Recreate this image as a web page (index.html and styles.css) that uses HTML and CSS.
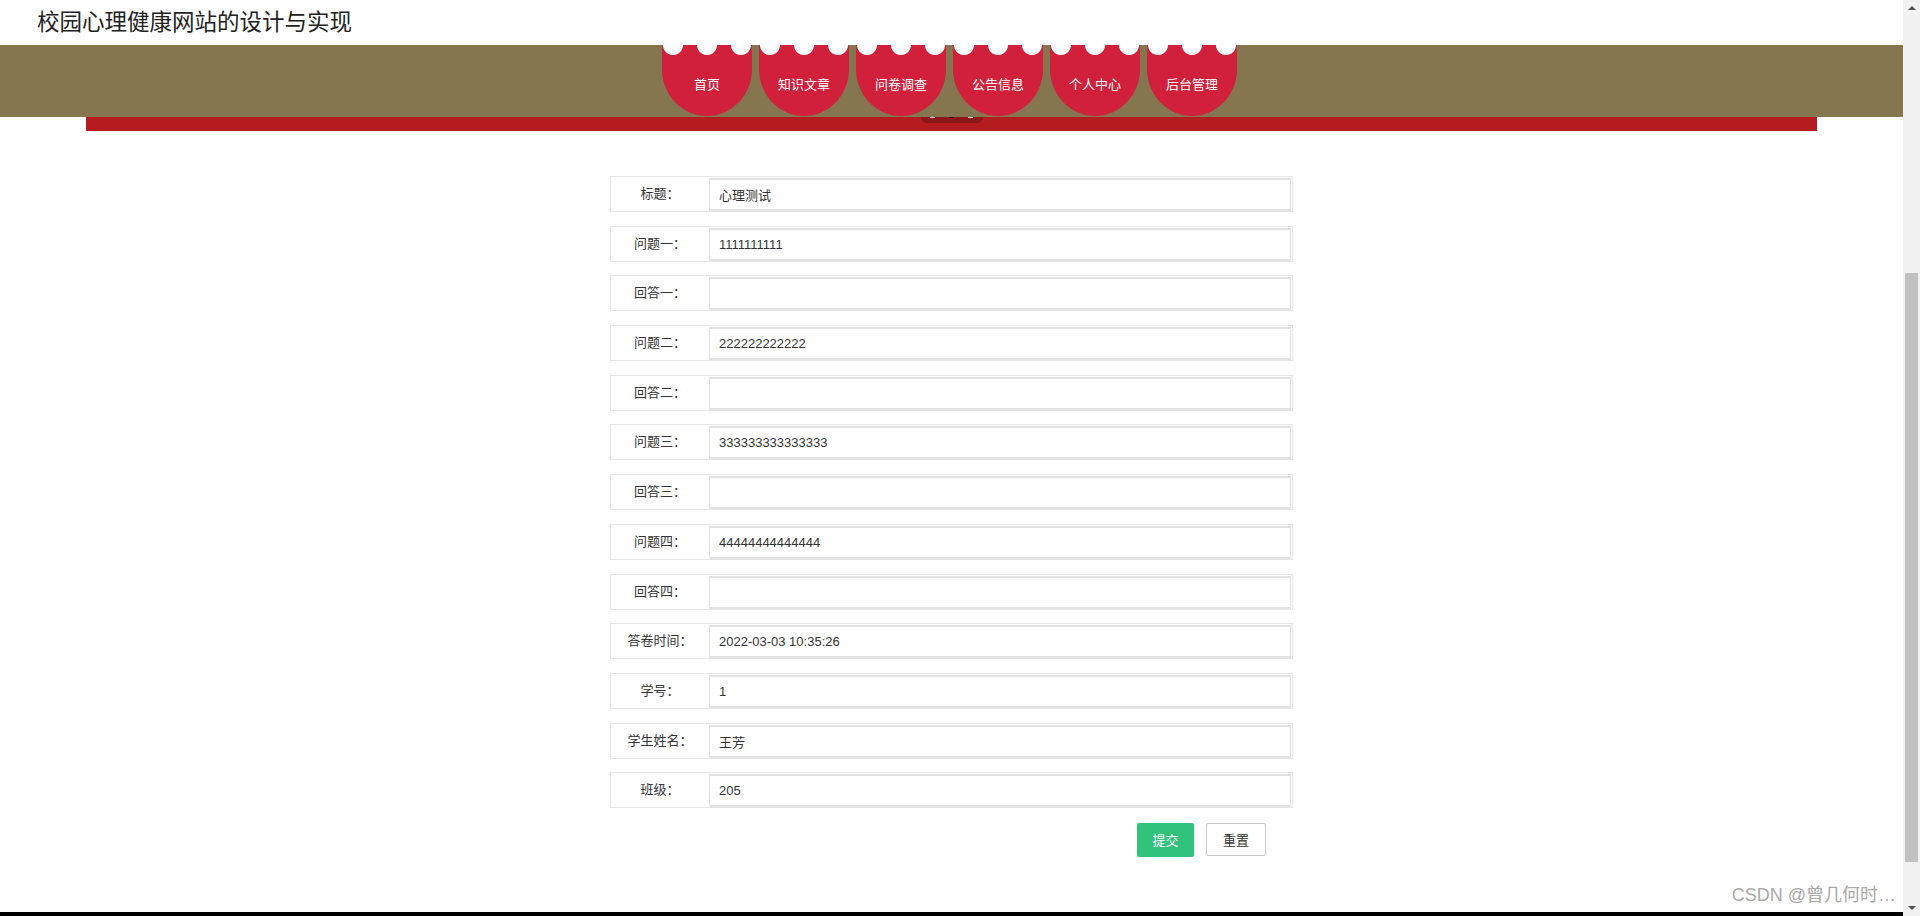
FILE: index.html
```html
<!DOCTYPE html>
<html>

<head>
    <meta charset="utf-8">
    <meta name="viewport" content="width=device-width, initial-scale=1">
    <title>校园心理健康网站的设计与实现</title>
    <link rel="stylesheet" href="styles.css">
</head>

<body>
    <div class="page">
        <div class="topbar">校园心理健康网站的设计与实现</div>

        <div class="navband">
            <a class="nav-tab" href="#">首页</a>
            <a class="nav-tab" href="#">知识文章</a>
            <a class="nav-tab" href="#">问卷调查</a>
            <a class="nav-tab" href="#">公告信息</a>
            <a class="nav-tab" href="#">个人中心</a>
            <a class="nav-tab" href="#">后台管理</a>
        </div>

        <div class="banner">
            <div class="banner-dots">
                <span class="dot light"></span>
                <span class="dot dark"></span>
                <span class="dot light"></span>
            </div>
        </div>

        <form class="detail-form">
            <div class="form-row">
                <label class="row-label">标题：</label>
                <div class="row-field"><input class="row-input" type="text" value="心理测试"></div>
            </div>
            <div class="form-row">
                <label class="row-label">问题一：</label>
                <div class="row-field"><input class="row-input" type="text" value="1111111111"></div>
            </div>
            <div class="form-row">
                <label class="row-label">回答一：</label>
                <div class="row-field"><input class="row-input" type="text" value=""></div>
            </div>
            <div class="form-row">
                <label class="row-label">问题二：</label>
                <div class="row-field"><input class="row-input" type="text" value="222222222222"></div>
            </div>
            <div class="form-row">
                <label class="row-label">回答二：</label>
                <div class="row-field"><input class="row-input" type="text" value=""></div>
            </div>
            <div class="form-row">
                <label class="row-label">问题三：</label>
                <div class="row-field"><input class="row-input" type="text" value="333333333333333"></div>
            </div>
            <div class="form-row">
                <label class="row-label">回答三：</label>
                <div class="row-field"><input class="row-input" type="text" value=""></div>
            </div>
            <div class="form-row">
                <label class="row-label">问题四：</label>
                <div class="row-field"><input class="row-input" type="text" value="44444444444444"></div>
            </div>
            <div class="form-row">
                <label class="row-label">回答四：</label>
                <div class="row-field"><input class="row-input" type="text" value=""></div>
            </div>
            <div class="form-row">
                <label class="row-label">答卷时间：</label>
                <div class="row-field"><input class="row-input" type="text" value="2022-03-03 10:35:26"></div>
            </div>
            <div class="form-row">
                <label class="row-label">学号：</label>
                <div class="row-field"><input class="row-input" type="text" value="1"></div>
            </div>
            <div class="form-row">
                <label class="row-label">学生姓名：</label>
                <div class="row-field"><input class="row-input" type="text" value="王芳"></div>
            </div>
            <div class="form-row">
                <label class="row-label">班级：</label>
                <div class="row-field"><input class="row-input" type="text" value="205"></div>
            </div>

            <div class="form-buttons">
                <button class="btn btn-submit" type="button">提交</button>
                <button class="btn btn-reset" type="reset">重置</button>
            </div>
        </form>

        <div class="bottom-bar"></div>
        <div class="watermark">CSDN @曾几何时…</div>
    </div>

    <div class="scrollbar">
        <span class="arrow-up"></span>
        <span class="scroll-thumb"></span>
        <span class="arrow-down"></span>
    </div>
</body>

</html>
```

FILE: styles.css
```css
html,
body {
    margin: 0;
    height: 100%;
}

body {
    overflow: hidden;
    display: flex;
    font-family: "Liberation Sans", "Noto Sans CJK SC", sans-serif;
    color: #333;
    background: #fff;
}

.page {
    position: relative;
    flex: 1;
    display: flex;
    flex-direction: column;
    height: 100vh;
}

.topbar {
    height: 45px;
    line-height: 45px;
    padding-left: 37px;
    font-size: 22.5px;
    color: #222;
}

.navband {
    height: 72px;
    background-color: #86764f;
    display: flex;
    justify-content: center;
    gap: 7px;
    padding-right: 4px;
}

.nav-tab {
    width: 90px;
    height: 71px;
    box-sizing: border-box;
    padding-top: 32px;
    line-height: 16px;
    text-align: center;
    font-size: 13px;
    color: #fff;
    text-decoration: none;
    background-color: #d0203b;
    background-image: radial-gradient(circle at 50% 0, #fff 9.5px, transparent 10.5px);
    background-size: 34px 20px;
    background-position: -6px 0;
    background-repeat: repeat-x;
    border-radius: 0 0 45px 45px / 0 0 47px 47px;
}

.banner {
    width: 1731px;
    height: 14px;
    margin: 0 auto;
    background-color: #b51c1f;
}

.banner-dots {
    width: 62px;
    height: 6px;
    margin: 0 auto;
    display: flex;
    justify-content: center;
    gap: 14px;
    background-color: #8c1718;
    border-radius: 0 0 8px 8px;
}

.dot {
    width: 5px;
    height: 1px;
}

.dot.light {
    background: #f1d9d9;
}

.dot.dark {
    background: #2a0a0a;
}

.detail-form {
    width: 683px;
    margin: 45px auto 0;
    display: flex;
    flex-direction: column;
    gap: 13.7px;
}

.form-row {
    display: flex;
    height: 36px;
    box-sizing: border-box;
    border: 1px solid #e6e6e6;
}

.row-label {
    width: 98px;
    flex-shrink: 0;
    line-height: 34px;
    text-align: center;
    font-size: 13px;
    color: #333;
}

.row-field {
    flex: 1;
    padding: 1px 1px 0 0;
}

.row-input {
    width: 100%;
    height: 100%;
    box-sizing: border-box;
    margin: 0;
    border: 1px solid #e2e2e2;
    border-width: 2px 1px 2px 1px;
    padding: 0 9px;
    font-family: "Liberation Sans", "Noto Sans CJK SC", sans-serif;
    font-size: 13px;
    color: #333;
    outline: none;
}

.form-buttons {
    display: flex;
    justify-content: flex-end;
    gap: 12px;
    padding-right: 27px;
    margin-top: 1px;
}

.btn {
    height: 34px;
    margin: 0;
    font-family: "Liberation Sans", "Noto Sans CJK SC", sans-serif;
    font-size: 13px;
    border-radius: 2px;
    cursor: pointer;
}

.btn-submit {
    width: 57px;
    color: #fff;
    background-color: #31c27c;
    border: none;
}

.btn-reset {
    width: 60px;
    height: 33px;
    color: #333;
    background-color: #fff;
    border: 1px solid #c9c9c9;
}

.bottom-bar {
    margin-top: auto;
    height: 4px;
    background: #000;
}

.watermark {
    position: absolute;
    right: 7px;
    bottom: 10px;
    font-size: 18px;
    color: #a9a9a9;
    white-space: nowrap;
}

.scrollbar {
    width: 17px;
    flex-shrink: 0;
    height: 100vh;
    background: #f1f1f1;
    display: flex;
    flex-direction: column;
    align-items: center;
}

.arrow-up {
    margin-top: 6px;
    border-left: 4px solid transparent;
    border-right: 4px solid transparent;
    border-bottom: 4px solid #505050;
}

.scroll-thumb {
    width: 13px;
    height: 589px;
    margin-top: 263px;
    background: #c1c1c1;
}

.arrow-down {
    margin-top: auto;
    margin-bottom: 6px;
    border-left: 4px solid transparent;
    border-right: 4px solid transparent;
    border-top: 4px solid #505050;
}
```
